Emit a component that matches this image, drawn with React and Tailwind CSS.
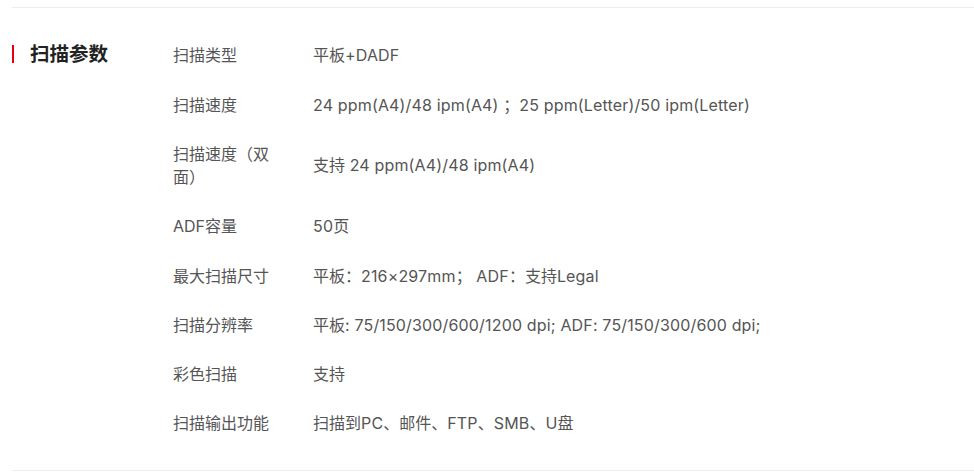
function Val({ v }) {
  const parts = v.split(/([\u0020-\u00ff]+)/).filter(Boolean);
  return (
    <>
      {parts.map((p, i) =>
        /^[\u0020-\u00ff]+$/.test(p) ? (
          <span key={i} className="tracking-[0.16px]">{p}</span>
        ) : (
          <span key={i}>{p}</span>
        )
      )}
    </>
  );
}

export default function App() {
  const rows = [
    ["扫描类型", "平板+DADF"],
    ["扫描速度", "24 ppm(A4)/48 ipm(A4) ；25 ppm(Letter)/50 ipm(Letter)"],
    ["扫描速度（双面）", "支持 24 ppm(A4)/48 ipm(A4)"],
    ["ADF容量", "50页"],
    ["最大扫描尺寸", "平板：216×297mm； ADF：支持Legal"],
    ["扫描分辨率", "平板: 75/150/300/600/1200 dpi; ADF: 75/150/300/600 dpi;"],
    ["彩色扫描", "支持"],
    ["扫描输出功能", "扫描到PC、邮件、FTP、SMB、U盘"],
  ];
  return (
    <div
      className="w-[974px] h-[473px] bg-white pt-[7px] overflow-hidden"
      style={{ fontFamily: 'Inter, "Noto Sans CJK SC", sans-serif' }}
    >
      <div className="ml-[12px] border-t border-b border-[#ececec] flex pt-[23.5px] pb-[21px]">
        <div className="w-[161px] flex items-start pt-[11px]">
          <div className="w-[2px] h-[18px] bg-[#e60012] mt-[2px]" />
          <div className="ml-[16px] text-[19.5px] leading-[22px] font-bold text-[#222]">扫描参数</div>
        </div>
        <div className="flex flex-col">
          {rows.map(([k, v]) => (
            <div key={k} className="flex py-[12.85px] text-[16px] leading-[23.5px] text-[#555]">
              <div className="w-[100px] shrink-0">{k}</div>
              <div className="ml-[40px] flex items-center">
                <div><Val v={v} /></div>
              </div>
            </div>
          ))}
        </div>
      </div>
    </div>
  );
}
